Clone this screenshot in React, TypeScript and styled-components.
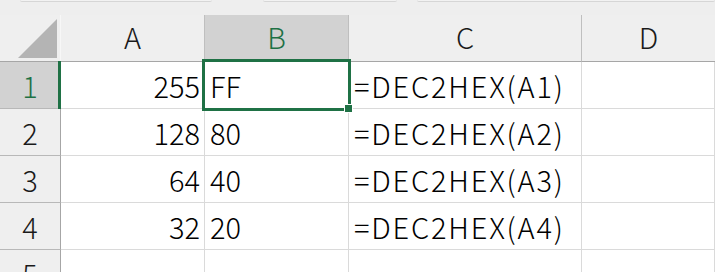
import React from "react";
import styled, { createGlobalStyle } from "styled-components";

const GREEN = "#1f7145";

const Global = createGlobalStyle`
  html, body { margin: 0; padding: 0; background: #ffffff; overflow: hidden; }
  body { font-family: "Noto Sans CJK JP", "Noto Sans", sans-serif; }
`;

const Page = styled.div`
  width: 715px;
  height: 272px;
  overflow: hidden;
  background: #ffffff;
  display: flex;
  flex-direction: column;
`;

const TopStrip = styled.div`
  height: 15px;
  flex: none;
  background: #eeeeee;
  display: flex;
  align-items: flex-start;
`;

const TabEdge = styled.div<{ $left: number; $width?: number }>`
  margin-left: ${(p) => p.$left}px;
  ${(p) => (p.$width ? `width: ${p.$width}px;` : "flex: 1;")}
  height: 1px;
  background: #f2f2f2;
  border-bottom: 1px solid #d6d6d6;
  border-radius: 0 0 3px 3px;
`;

const Grid = styled.div`
  display: grid;
  grid-template-columns: 61px 144px 144px 233px 1fr;
  grid-template-rows: 47px repeat(5, 47px);
  flex: none;
`;

const Corner = styled.div`
  background: #efefef;
  border-right: 1px solid #f7f7f7;
  border-bottom: 1px solid #a6a6a6;
  display: flex;
  align-items: flex-end;
  justify-content: flex-end;
  padding: 0 3px 3px 0;
  box-sizing: border-box;
`;

const ColHead = styled.div<{ $active?: boolean; $last?: boolean }>`
  box-sizing: border-box;
  background: ${(p) => (p.$active ? "#d2d2d2" : "#efefef")};
  color: ${(p) => (p.$active ? GREEN : "#1a1a1a")};
  border-right: ${(p) => (p.$last ? "none" : "1px solid #bfbfbf")};
  border-bottom: 1px solid #a6a6a6;
  display: flex;
  align-items: center;
  justify-content: center;
  font-size: 29px;
  font-weight: 300;
  padding-bottom: 5px;
`;

const RowHead = styled.div<{ $active?: boolean }>`
  box-sizing: border-box;
  position: relative;
  background: ${(p) => (p.$active ? "#d2d2d2" : "#efefef")};
  color: ${(p) => (p.$active ? GREEN : "#1a1a1a")};
  border-right: 1px solid #a6a6a6;
  border-bottom: 1px solid #b8b8b8;
  display: flex;
  align-items: center;
  justify-content: center;
  font-size: 29px;
  font-weight: 300;
  padding-top: 0;
  ${(p) =>
    p.$active &&
    `&::after { content: ""; position: absolute; right: -1px; top: -1px; bottom: -1px; width: 3px; background: ${GREEN}; }`}
`;

const Cell = styled.div<{ $align?: "left" | "right"; $spaced?: boolean }>`
  box-sizing: border-box;
  position: relative;
  background: #ffffff;
  color: #000;
  border-right: 1px solid #dadada;
  border-bottom: 1px solid #dadada;
  display: flex;
  align-items: center;
  justify-content: ${(p) => (p.$align === "right" ? "flex-end" : "flex-start")};
  padding: 0 ${(p) => (p.$align === "right" ? "4px" : "0")} 0 ${(p) => (p.$align === "right" ? "0" : "5px")};
  font-size: 29px;
  font-weight: 300;
  letter-spacing: ${(p) => (p.$spaced ? "1.8px" : "0")};
  white-space: nowrap;
`;

const Selection = styled.div`
  position: absolute;
  left: -3px;
  top: -3px;
  width: 149px;
  height: 52px;
  box-sizing: border-box;
  border: 3px solid ${GREEN};
  pointer-events: none;
  z-index: 2;
`;

const FillHandle = styled.div`
  position: absolute;
  right: -5px;
  bottom: -5px;
  width: 7px;
  height: 7px;
  background: ${GREEN};
  border: 1px solid #ffffff;
`;

const CornerTriangle = () => (
  <svg width="39" height="39" viewBox="0 0 39 39">
    <polygon points="0,39 39,0 39,39" fill="#b4b4b4" />
  </svg>
);

const rows = [
  { n: 1, a: "255", b: "FF", c: "=DEC2HEX(A1)" },
  { n: 2, a: "128", b: "80", c: "=DEC2HEX(A2)" },
  { n: 3, a: "64", b: "40", c: "=DEC2HEX(A3)" },
  { n: 4, a: "32", b: "20", c: "=DEC2HEX(A4)" },
  { n: 5, a: "", b: "", c: "" },
];

export default function App() {
  return (
    <Page>
      <Global />
      <TopStrip>
        <TabEdge $left={20} $width={192} />
        <TabEdge $left={51} $width={134} />
        <TabEdge $left={20} />
      </TopStrip>
      <Grid>
        <Corner>
          <CornerTriangle />
        </Corner>
        <ColHead>A</ColHead>
        <ColHead $active>B</ColHead>
        <ColHead>C</ColHead>
        <ColHead $last>D</ColHead>
        {rows.map((r) => (
          <React.Fragment key={r.n}>
            <RowHead $active={r.n === 1}>{r.n}</RowHead>
            <Cell $align="right">{r.a}</Cell>
            <Cell>
              {r.b}
              {r.n === 1 && (
                <Selection>
                  <FillHandle />
                </Selection>
              )}
            </Cell>
            <Cell $spaced>{r.c}</Cell>
            <Cell />
          </React.Fragment>
        ))}
      </Grid>
    </Page>
  );
}
